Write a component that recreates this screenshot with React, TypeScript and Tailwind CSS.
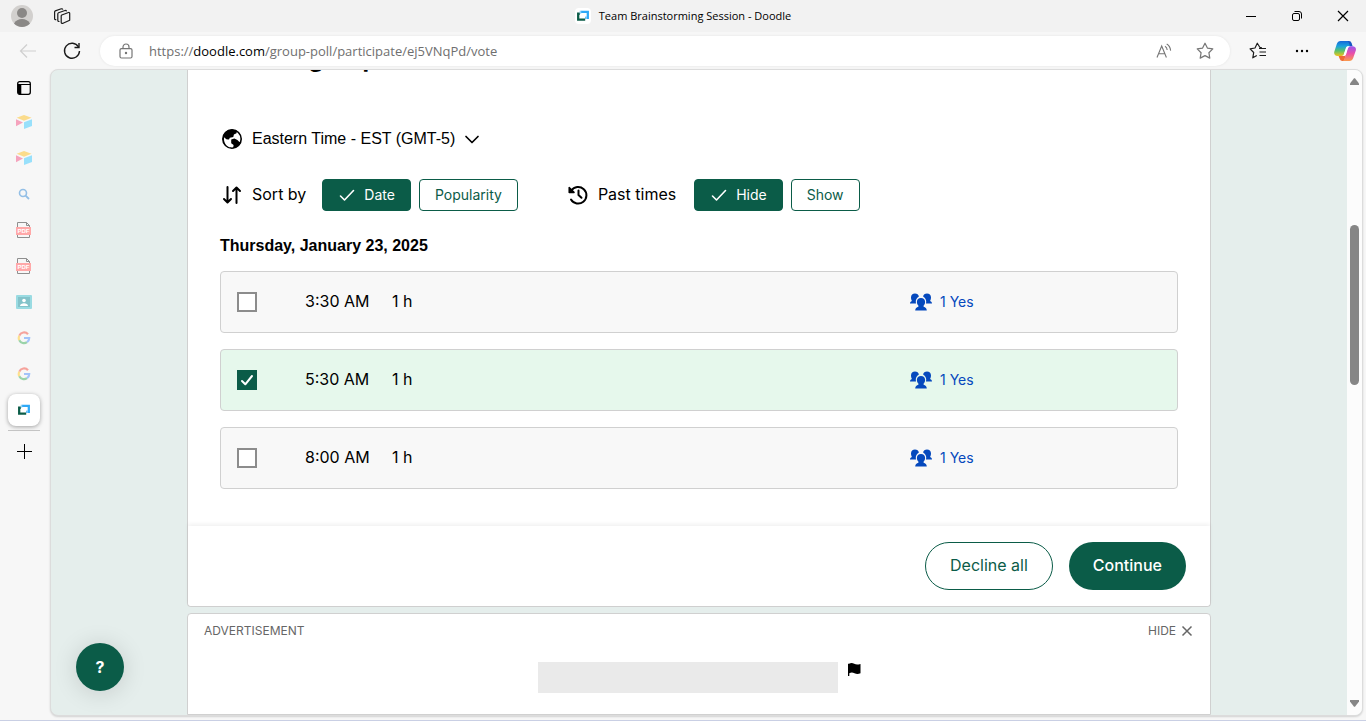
import { useState } from "react";
import type { ReactNode } from "react";

const chromeFont = "font-['Open_Sans','Noto_Sans',sans-serif]";

function DoodleMark({ className }: { className: string }) {
  return (
    <svg viewBox="0 0 16 16" className={className} aria-hidden="true">
      <path d="M5.5 3.2h8v7h-3.200" fill="none" stroke="#2ea9f7" strokeWidth="2.600" />
      <path d="M10.500 12.200h-8v-7h2" fill="none" stroke="#0b5c48" strokeWidth="2.600" />
      <path d="M4.200 2h1.800v3.500H4.200zM10.800 8.900h1.500v2.500h-1.500z" fill="#8fd3fb" />
    </svg>
  );
}

function Blocks() {
  return (
    <svg viewBox="0 0 16 14" className="h-3.5 w-4" aria-hidden="true">
      <path d="M8 0l7.500 2.800L8 5.800.7 2.800z" fill="#fbdc8c" />
      <path d="M0 4.200l7 3.400L0 11.200z" fill="#f5a3bd" />
      <path d="M8 7.300l8-3v6.700l-8 3z" fill="#98e0fb" />
    </svg>
  );
}

function Pdf() {
  return (
    <svg viewBox="0 0 16 18" className="h-[18px] w-4" aria-hidden="true">
      <path d="M1.500 7V1.500h9l3 3V7M1.500 13v3.500h12V13M10.500 1.500v3h3" fill="none" stroke="#8f8f8f" />
      <rect x="0" y="6" width="15" height="8" fill="#ffa8a8" />
      <text x="7.500" y="12.300" fontSize="6" fontWeight="700" textAnchor="middle" fill="#fff" fontFamily="Liberation Sans, sans-serif">PDF</text>
    </svg>
  );
}

function Google() {
  return (
    <svg viewBox="0 0 14 14" className="h-3.5 w-3.5" fill="none" strokeWidth="2.200" aria-hidden="true">
      <path d="M11 3.200A5.200 5.200 0 0 0 2.300 4.700" stroke="#f6a39c" />
      <path d="M2.300 4.700a5.200 5.200 0 0 0 0 4.600" stroke="#fde08e" />
      <path d="M2.300 9.300a5.200 5.200 0 0 0 7.700 1.900" stroke="#9ad3a9" />
      <path d="M10 11.200A5.200 5.200 0 0 0 12.200 7H7" stroke="#a3c3fa" />
    </svg>
  );
}

function Contact() {
  return (
    <svg viewBox="0 0 16 14" className="h-3.5 w-4" aria-hidden="true">
      <rect width="16" height="14" rx="1" fill="#9adbe2" />
      <rect x="2" y="2" width="12" height="10" fill="#84c3ca" />
      <circle cx="8" cy="5.500" r="1.800" fill="#fff" />
      <path d="M4 11c0-2 2-2.800 4-2.800s4 .8 4 2.800z" fill="#fff" />
    </svg>
  );
}

function Search() {
  return (
    <svg viewBox="0 0 12 12" className="h-3 w-3" fill="none" aria-hidden="true">
      <circle cx="5" cy="5" r="3.500" stroke="#93bfe6" strokeWidth="1.600" />
      <path d="M7.600 7.600L11 11" stroke="#93bfe6" strokeWidth="1.800" />
    </svg>
  );
}

const sideTabs: { name: string; icon: ReactNode }[] = [
  { name: "Bases", icon: <Blocks /> },
  { name: "Workspace", icon: <Blocks /> },
  { name: "Search", icon: <Search /> },
  { name: "Document one", icon: <Pdf /> },
  { name: "Document two", icon: <Pdf /> },
  { name: "Contacts", icon: <Contact /> },
  { name: "Google", icon: <Google /> },
  { name: "Google results", icon: <Google /> },
];

function TitleBar() {
  return (
    <header className="flex h-8 shrink-0 items-center bg-[#f2f2f2]">
      <div className="flex flex-1 items-center gap-5">
        <button aria-label="Profile" className="ml-[11px]">
          <svg viewBox="0 0 22 22" className="h-[22px] w-[22px]" aria-hidden="true">
            <circle cx="11" cy="11" r="11" fill="#d2d0ce" />
            <circle cx="11" cy="8" r="5" fill="#8a8886" />
            <path d="M3 18.500c1.500-3 4.500-4.500 8-4.500s6.500 1.500 8 4.500A11 11 0 0 1 3 18.500z" fill="#8a8886" />
          </svg>
        </button>
        <button aria-label="Workspaces">
          <svg viewBox="0 0 18 18" className="h-[18px] w-[18px]" fill="none" stroke="#1b1b1b" strokeWidth="1.200" strokeLinejoin="round" aria-hidden="true">
            <path d="M8.800 8L15.500 5.500q1.200-.2 1.200 1v6.700L10 16.300q-1.800.4-1.800-1V9q0-.7.600-1z" />
            <path d="M6.500 14.500q-1.700.2-1.700-1.200V6.900q0-.8.700-1.100l6.500-2.300q1.300-.2 1.500.8" />
            <path d="M3.300 12.600q-1.700.2-1.700-1.200V5q0-.8.700-1.100l6-2.100q1.300-.2 1.500.8" />
          </svg>
        </button>
      </div>
      <div className="flex items-center gap-2">
        <span className="flex h-4 w-4 items-center justify-center rounded-sm bg-white">
          <DoodleMark className="h-3.5 w-3.5" />
        </span>
        <span className="text-[11px] leading-4 text-black">Team Brainstorming Session - Doodle</span>
      </div>
      <div className="flex flex-1 justify-end text-black">
        <button aria-label="Minimize" className="flex h-8 w-[46px] items-center justify-center">
          <svg viewBox="0 0 12 12" className="h-3 w-3" stroke="currentColor" aria-hidden="true"><path d="M1 6.500h10" /></svg>
        </button>
        <button aria-label="Restore" className="flex h-8 w-[46px] items-center justify-center">
          <svg viewBox="0 0 12 12" className="h-3 w-3" fill="none" stroke="currentColor" aria-hidden="true">
            <rect x="1.500" y="3.500" width="7" height="7" rx="1.500" />
            <path d="M3.500 1.500h4.500a2.500 2.500 0 0 1 2.500 2.500v4.500" />
          </svg>
        </button>
        <button aria-label="Close" className="flex h-8 w-[46px] items-center justify-center">
          <svg viewBox="0 0 12 12" className="h-3 w-3" stroke="currentColor" strokeWidth="1.200" aria-hidden="true"><path d="M1 1l10 10M11 1L1 11" /></svg>
        </button>
      </div>
    </header>
  );
}

function Toolbar() {
  return (
    <div className="flex h-[37px] shrink-0 items-center bg-[#f7f7f7] pr-2.5">
      <button aria-label="Back" className="ml-[19px]">
        <svg viewBox="0 0 18 18" className="h-[18px] w-[18px]" fill="none" stroke="#cfcfcf" strokeWidth="1.200" aria-hidden="true"><path d="M17 9H1.500M8 2.500L1.500 9 8 15.500" /></svg>
      </button>
      <button aria-label="Refresh" className="ml-[26px]">
        <svg viewBox="0 0 18 18" className="h-[18px] w-[18px]" fill="none" stroke="#1b1b1b" strokeWidth="1.400" aria-hidden="true">
          <path d="M15.500 5A7.500 7.500 0 1 0 16.500 9" />
          <path d="M16 1v4.500h-4.500" />
        </svg>
      </button>
      <div className="ml-[19px] flex h-[30px] min-w-0 flex-1 items-center rounded-full bg-white pl-[19px] pr-4 shadow-[0_0_3px_rgba(0,0,0,0.08)]">
        <svg viewBox="0 0 14 16" className="h-4 w-3.5 shrink-0" fill="none" stroke="#767676" strokeWidth="1.200" aria-hidden="true">
          <rect x="1" y="5.600" width="12" height="9.400" rx="1.500" />
          <path d="M4 5.500V4a3 3 0 0 1 6 0v1.500" />
          <circle cx="7" cy="10" r=".6" fill="#767676" />
        </svg>
        <a href="https://doodle.com/group-poll/participate/ej5VNqPd/vote" className="ml-4 mr-auto flex whitespace-nowrap text-[13px] leading-5 text-[#6f6f6f]">
          <span>https://</span>
          <span className="text-black">doodle.com</span>
          <span>/group-poll/participate/ej5VNqPd/vote</span>
        </a>
        <button aria-label="Read aloud">
          <svg viewBox="0 0 16 16" className="h-4 w-4" fill="none" stroke="#767676" strokeWidth="1.100" aria-hidden="true">
            <path d="M1 14.500L5.700 3l4.700 11.500M2.600 10.700h6.200" />
            <path d="M9 3.200q2 1.200 2.200 3.800M10.700 1q3.500 2 3.900 6.600" />
          </svg>
        </button>
        <button aria-label="Add to favorites" className="ml-6">
          <svg viewBox="0 0 18 18" className="h-[18px] w-[18px]" fill="none" stroke="#767676" strokeWidth="1.200" strokeLinejoin="round" aria-hidden="true">
            <path d="M9 1.200l2.400 4.900 5.400.8-3.900 3.800.9 5.400L9 13.600l-4.800 2.500.9-5.400-3.900-3.800 5.400-.8z" />
          </svg>
        </button>
      </div>
      <button aria-label="Favorites" className="ml-[19px]">
        <svg viewBox="0 0 18 18" className="h-[18px] w-[18px]" fill="none" stroke="#1b1b1b" strokeWidth="1.200" strokeLinejoin="round" aria-hidden="true">
          <path d="M12.800 5.500l-2-.2L8.300 1.200 6 6l-4.900.8 3.600 3.700-.9 5.300 4-2.300M10 6.500h7M10.500 10H17M10.500 13.500H17" />
        </svg>
      </button>
      <button aria-label="Settings and more" className="ml-7">
        <svg viewBox="0 0 14 4" className="h-1 w-3.5" aria-hidden="true"><circle cx="2" cy="2" r="1.200" /><circle cx="7" cy="2" r="1.200" /><circle cx="12" cy="2" r="1.200" /></svg>
      </button>
      <button aria-label="Copilot" className="ml-[25px]">
        <svg viewBox="0 0 22 20" className="h-5 w-[22px]" aria-hidden="true">
          <defs>
            <linearGradient id="coolSide" x1="0" y1="0" x2="0" y2="1">
              <stop offset="0" stopColor="#1768d8" />
              <stop offset=".35" stopColor="#1ba4dd" />
              <stop offset=".65" stopColor="#5bc16c" />
              <stop offset="1" stopColor="#f0c419" />
            </linearGradient>
            <linearGradient id="warmSide" x1="0" y1="0" x2="0" y2="1">
              <stop offset="0" stopColor="#9a55ef" />
              <stop offset=".5" stopColor="#ea4fa8" />
              <stop offset="1" stopColor="#fb9a4b" />
            </linearGradient>
          </defs>
          <path d="M12 0h3q2 0 2.600 2l1 3.200h-4.400q-2-1.200-2.200-5.200z" fill="#1857c4" />
          <path d="M4.500 14.800h2.800q1.900 0 2.500-1.800l2.200 1L10 20H8.400q-2 0-2.600-2z" fill="#ef6a35" />
          <path d="M6.600 0h6.600q1.200 0 1.800 2l.9 3.200h-1.700q-1.700 0-2.300 1.900L9.900 13q-.7 2-2.700 2H3.600Q-.3 14.800.2 11L2.800 3Q3.800 0 6.600 0z" fill="url(#coolSide)" />
          <path d="M15.400 20H8.800q1.200-.4 1.800-2.400l3.100-10.200q.7-2.200 2.500-2.200h2.200q4 .2 3.500 4L19.200 17q-1 3-3.800 3z" fill="url(#warmSide)" />
          <path d="M12.200 6.500q.5-1.300 2-1.300h1.900q-1.600.3-2.300 2.300l-1.900 6.200q-.5 1.300-1.900 1.300H8q1.600-.3 2.100-2z" fill="#fff" />
        </svg>
      </button>
    </div>
  );
}

function SideTabs() {
  return (
    <nav aria-label="Tabs" className="flex w-[50px] shrink-0 flex-col bg-[#f7f7f7] pr-0.5">
      <button aria-label="Tab actions" className="flex h-[35px] items-center justify-center pt-0.5">
        <svg viewBox="0 0 14 14" className="h-3.5 w-3.5" aria-hidden="true">
          <rect x=".7" y=".7" width="12.600" height="12.600" rx="2" fill="none" stroke="#000" strokeWidth="1.300" />
          <path d="M1 3.500h12.500" stroke="#000" />
          <path d="M1 3.500h3.300V13H2L1 12z" />
        </svg>
      </button>
      {sideTabs.map((tab) => (
        <button key={tab.name} aria-label={tab.name} className="flex h-9 items-center justify-center">
          {tab.icon}
        </button>
      ))}
      <button aria-label="Doodle" className="mx-2 mt-0.5 flex h-8 items-center justify-center rounded-lg bg-white shadow-[0_1px_4px_rgba(0,0,0,0.35)]">
        <DoodleMark className="h-3.5 w-3.5" />
      </button>
      <div className="mx-2 mt-1 h-px bg-[#c4c4c4]" />
      <button aria-label="New tab" className="mt-2 flex h-6 items-center justify-center">
        <svg viewBox="0 0 15 15" className="h-[15px] w-[15px]" stroke="#000" aria-hidden="true"><path d="M7.500 0v15M0 7.500h15" /></svg>
      </button>
    </nav>
  );
}

function Check({ className }: { className: string }) {
  return (
    <svg viewBox="0 0 18 18" className={className} fill="none" stroke="currentColor" strokeWidth="1.600" strokeLinecap="round" strokeLinejoin="round" aria-hidden="true">
      <path d="M2.500 10l4 4 9-9.500" />
    </svg>
  );
}

function Choice({ label, active, onSelect }: { label: string; active: boolean; onSelect: () => void }) {
  return (
    <button
      aria-pressed={active}
      onClick={onSelect}
      className={
        active
          ? "flex h-8 items-center gap-2 rounded border border-[#0b5c48] bg-[#0b5c48] px-[15px] text-sm text-white"
          : "flex h-8 items-center gap-2 rounded border border-[#0b5c48] bg-white px-[15px] text-sm text-[#0b5c48]"
      }
    >
      {active && <Check className="h-[18px] w-[18px]" />}
      {label}
    </button>
  );
}

function People() {
  return (
    <svg viewBox="0 0 22 18" className="h-[18px] w-[22px]" fill="#0549bd" aria-hidden="true">
      <path d="M5 .5c2.100 0 3.600 1.100 3.900 2.900C7 4.500 5.800 6.300 5.800 8.600c0 .7.100 1.300.2 1.900H0C0 9.200.6 8.500 1.900 8 1.500 7 1 5.700 1 4.400 1 2 2.700.5 5 .5z" />
      <path d="M17 .5c-2.100 0-3.600 1.100-3.900 2.900 1.900 1.100 3.100 2.900 3.100 5.200 0 .7-.1 1.300-.2 1.900h6c0-1.300-.6-2-1.900-2.500.4-1 .9-2.300.9-3.600C21 2 19.300.5 17 .5z" />
      <path d="M11 4.900c2.500 0 4.100 1.600 4.100 4 0 1.600-.7 2.800-1.500 3.700v1.200c1.800.5 3.100 1.400 3.200 3.700H5.200c.1-2.300 1.400-3.200 3.200-3.700v-1.200c-.8-.9-1.500-2.100-1.500-3.700 0-2.400 1.600-4 4.100-4z" />
    </svg>
  );
}

const slots = [
  { id: "slot-330", time: "3:30 AM" },
  { id: "slot-530", time: "5:30 AM" },
  { id: "slot-800", time: "8:00 AM" },
];

function Poll() {
  const [sort, setSort] = useState("Date");
  const [past, setPast] = useState("Hide");
  const [picked, setPicked] = useState<string[]>(["slot-530"]);
  const toggle = (id: string) =>
    setPicked((now) => (now.includes(id) ? now.filter((x) => x !== id) : [...now, id]));

  return (
    <section className="rounded-b border border-t-0 border-[#d0d0d0] bg-white">
      <div className="px-8 pb-[37px]">
        <h1 className="-mt-[27px] text-2xl font-bold leading-8">Doodle group</h1>
        <button className="mt-[52px] flex h-6 items-center font-['Liberation_Sans',Arial,sans-serif] text-base">
          <svg viewBox="0 0 24 24" className="mr-2 h-6 w-6" aria-hidden="true">
            <circle cx="12" cy="12" r="9.200" fill="#fff" stroke="#000" strokeWidth="1.600" />
            <path d="M3 12C2.600 6.500 7 2.200 12.500 2.400l4.500 1.300-.5 2.500-2.600 1.200-.6 2.500-3.500.8-.8 1.700H5.500l2.800 2.400-.6 2.200.9 2.800C5.200 18.500 3 15.500 3 12z" />
            <path d="M4.200 10.300l2.600 2.500 2.700.3-.3 2.500 1.700 1.600-.8 3.300C6 19.300 3.200 15 4.200 10.300z" fill="#fff" />
            <path d="M11.200 12.600l3.200-1 3 1.300 2 2 1.500-.3c-1 3.500-4 6.300-7.800 6.700l.5-3.300-2.400-1.700z" />
          </svg>
          Eastern Time - EST (GMT-5)
          <svg viewBox="0 0 24 24" className="ml-[5px] h-6 w-6" fill="none" stroke="#000" strokeWidth="1.700" strokeLinecap="round" strokeLinejoin="round" aria-hidden="true"><path d="M6 9.500l6 6 6-6" /></svg>
        </button>

        <div className="mt-7 flex flex-wrap items-center gap-x-12">
          <div className="flex items-center gap-2">
            <svg viewBox="0 0 24 24" className="h-6 w-6" fill="none" stroke="#000" strokeWidth="2" strokeLinecap="round" strokeLinejoin="round" aria-hidden="true">
              <path d="M7.500 4v15M4 16l3.500 3.500L11 16M16.500 20V4.500M13 8l3.500-3.500L20 8" />
            </svg>
            <span className="mr-2 pb-0.5 text-base">Sort by</span>
            {["Date", "Popularity"].map((x) => (
              <Choice key={x} label={x} active={sort === x} onSelect={() => setSort(x)} />
            ))}
          </div>
          <div className="flex items-center gap-2">
            <svg viewBox="0 0 24 24" className="h-6 w-6" fill="none" stroke="#000" strokeWidth="2" strokeLinecap="round" strokeLinejoin="round" aria-hidden="true">
              <path d="M5.300 7.500A8.300 8.300 0 1 1 5 16.500" />
              <path d="M3.200 4.600v4.800h4.800z" fill="#000" strokeWidth="1.500" />
              <path d="M12.500 7.500V12l3 2.800" />
            </svg>
            <span className="mr-2.5 pb-0.5 text-base">Past times</span>
            {["Hide", "Show"].map((x) => (
              <Choice key={x} label={x} active={past === x} onSelect={() => setPast(x)} />
            ))}
          </div>
        </div>

        <h2 className="mt-6 font-['Liberation_Sans',Arial,sans-serif] text-base font-bold leading-[22px]">Thursday, January 23, 2025</h2>
        <ul className="mt-3.5 flex flex-col gap-4">
          {slots.map((slot) => {
            const on = picked.includes(slot.id);
            return (
              <li
                key={slot.id}
                className={
                  on
                    ? "grid h-[62px] grid-cols-[68px_87px_1fr_251px] items-center rounded border border-[#d0d0d0] bg-[#e6f8ec] px-4"
                    : "grid h-[62px] grid-cols-[68px_87px_1fr_251px] items-center rounded border border-[#d0d0d0] bg-[#f8f8f8] px-4"
                }
              >
                <span className="relative h-5 w-5">
                  <input
                    id={slot.id}
                    type="checkbox"
                    checked={on}
                    onChange={() => toggle(slot.id)}
                    className="block h-5 w-5 appearance-none border-2 border-[#8c8c8c] bg-white checked:border-[#0b5c48] checked:bg-[#0b5c48]"
                  />
                  {on && (
                    <svg viewBox="0 0 20 20" className="pointer-events-none absolute inset-0 h-5 w-5" fill="none" stroke="#fff" strokeWidth="2" strokeLinecap="round" strokeLinejoin="round" aria-hidden="true">
                      <path d="M5 11l3.300 3.300L15 6" />
                    </svg>
                  )}
                </span>
                <label htmlFor={slot.id} className="pb-0.5 text-base leading-6">{slot.time}</label>
                <span className="pb-0.5 text-base leading-6">1 h</span>
                <button className="flex items-center gap-2 text-sm text-[#0549bd]">
                  <People />
                  1 Yes
                </button>
              </li>
            );
          })}
        </ul>
      </div>
      <div className="flex justify-end gap-4 rounded-b bg-white px-6 py-4 shadow-[0_-2px_4px_rgba(0,0,0,0.06)]">
        <button className="h-12 rounded-full border border-[#0b5c48] px-6 pb-0.5 text-base text-[#0b5c48]">Decline all</button>
        <button className="h-12 rounded-full bg-[#0b5c48] px-6 pb-0.5 text-base font-medium text-white">Continue</button>
      </div>
    </section>
  );
}

function Advertisement() {
  return (
    <section className="mt-1.5 flex flex-1 flex-col rounded-t border border-[#d0d0d0] bg-white">
      <div className="flex items-center justify-between px-4 pt-2 text-xs leading-[18px] text-[#666666]">
        <span>ADVERTISEMENT</span>
        <button className="flex items-center gap-1">
          HIDE
          <svg viewBox="0 0 14 14" className="h-3.5 w-3.5" stroke="currentColor" strokeWidth="1.500" aria-hidden="true"><path d="M2.500 2.500l9 9M11.500 2.500l-9 9" /></svg>
        </button>
      </div>
      <div className="mt-[22px] flex items-start justify-center gap-2.5">
        <div className="h-[31px] w-[300px] bg-[#eaeaea]" />
        <button aria-label="Report">
          <svg viewBox="0 0 13 14" className="h-3.5 w-[13px]" aria-hidden="true">
            <path d="M0 1.800h1C3 .6 4.500.9 6.200 1.800s3 1.100 6.300.3v9.100c-2.200.9-4 .9-6 0s-3.500-.9-5.200.1V14H0z" />
          </svg>
        </button>
      </div>
    </section>
  );
}

export default function App() {
  return (
    <div className={`flex h-screen flex-col overflow-hidden bg-[#f7f7f7] ${chromeFont}`}>
      <TitleBar />
      <Toolbar />
      <div className="flex min-h-0 flex-1">
        <SideTabs />
        <main className="relative mr-[3px] flex min-w-0 flex-1 overflow-hidden rounded-lg border border-[#dcdcdc] bg-[#e5eeec] font-['Inter','Liberation_Sans',sans-serif] text-black shadow-[0_1px_2px_rgba(0,0,0,0.15)]">
          <div className="flex min-w-0 flex-1 justify-center overflow-hidden">
            <div className="flex w-full max-w-[1024px] flex-col">
              <Poll />
              <Advertisement />
            </div>
          </div>
          <button aria-label="Help" className="absolute bottom-6 left-[25px] h-12 w-12 rounded-full bg-[#0b5c48] text-base font-bold text-white shadow-[0_2px_24px_rgba(0,0,0,0.14)]">?</button>
          <div className="flex w-[15px] shrink-0 flex-col items-center bg-[#fcfcfc] py-2" aria-hidden="true">
            <svg viewBox="0 0 9 7" className="h-[7px] w-[9px]" fill="#868686"><path d="M4 .3h1L9 5.500V7H0V5.500z" /></svg>
            <div className="mt-[140px] h-40 w-[9px] rounded-full bg-[#868686]" />
            <svg viewBox="0 0 9 7" className="mt-auto h-[7px] w-[9px]" fill="#868686"><path d="M4 6.700h1L9 1.500V0H0v1.500z" /></svg>
          </div>
        </main>
      </div>
      <div className="mt-1 h-px shrink-0 bg-[#c9cfe4]" />
    </div>
  );
}
